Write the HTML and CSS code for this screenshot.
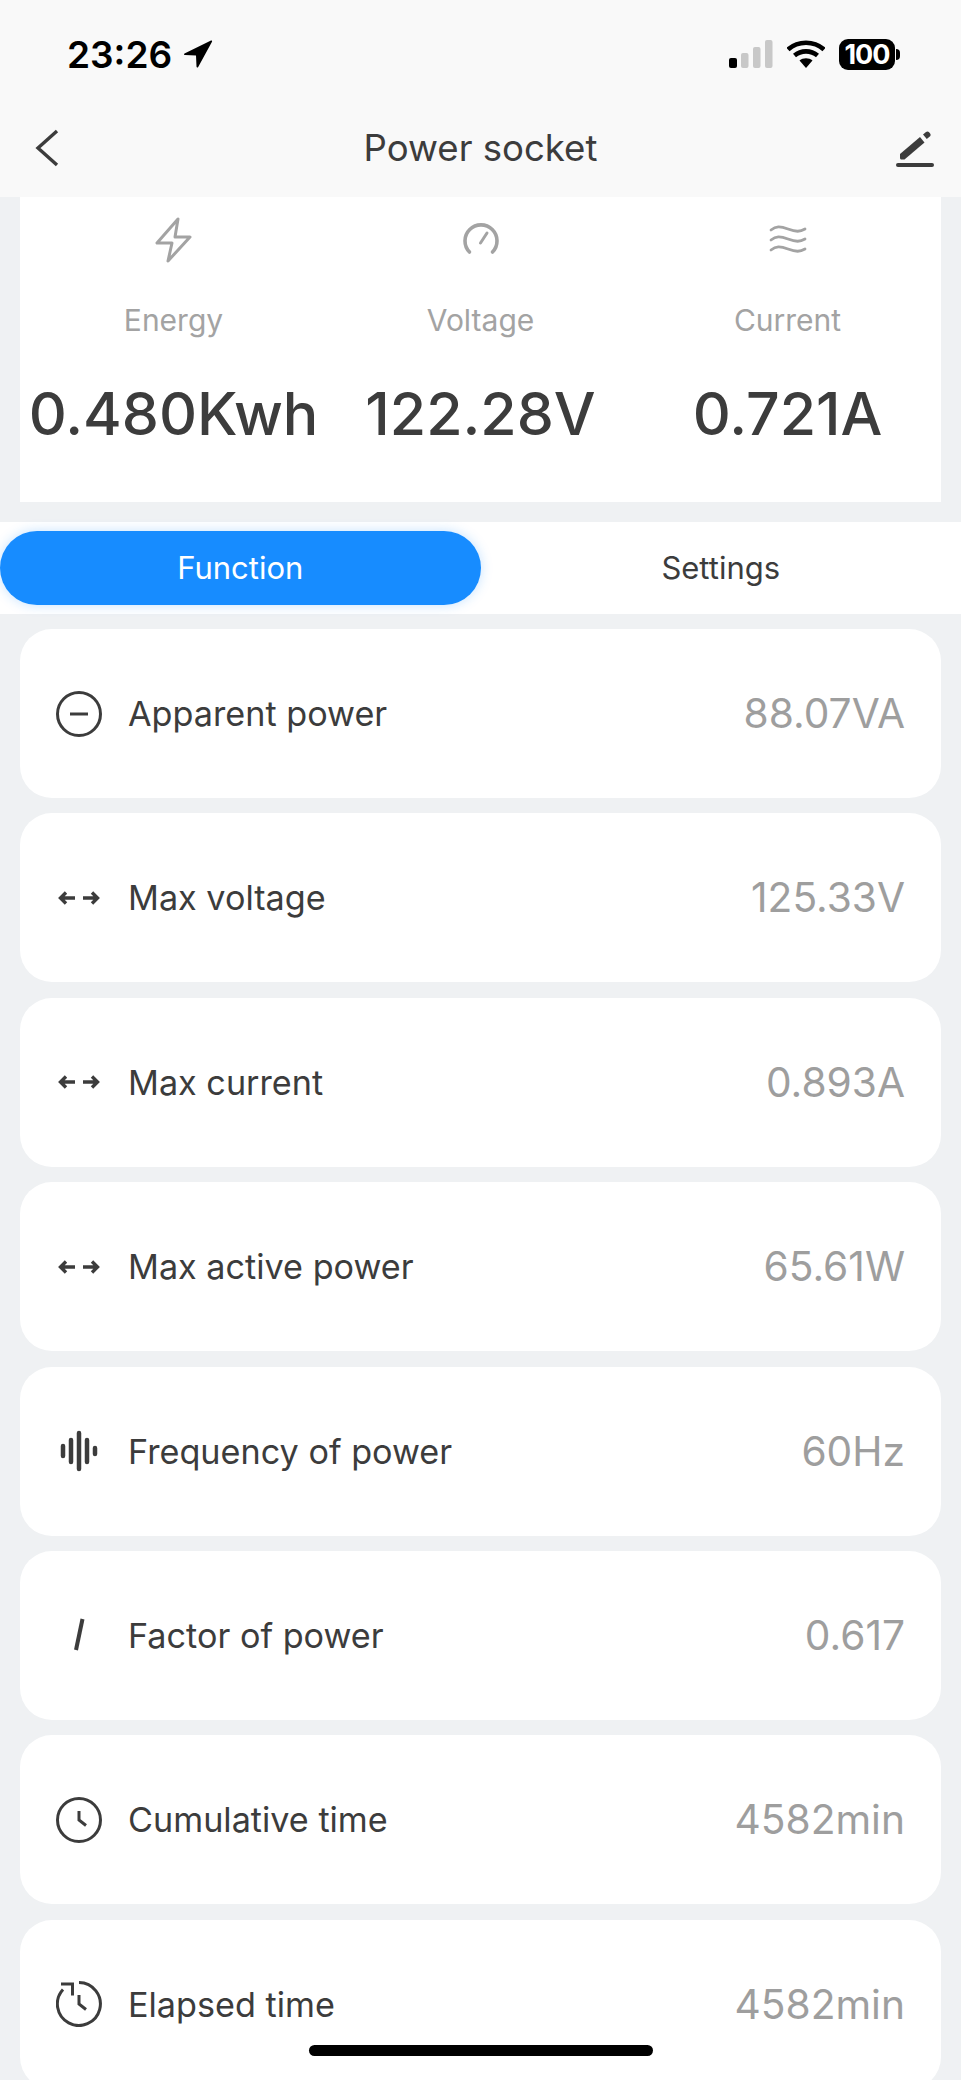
FILE: index.html
```html
<!DOCTYPE html>
<html lang="en">
<head>
    <meta charset="UTF-8">
    <meta name="viewport" content="width=device-width, initial-scale=1.0">
    <title>Power socket</title>
    <link rel="stylesheet" href="styles.css">
</head>
<body>

<div class="page">
    <div class="top">
        <div class="status">
            <div class="status-left">
                <span class="time">23:26</span>
                <svg class="arrow" viewBox="0 0 30 30"><path d="M28 1.500 1.500 14.500c-.8.5-.5 1.600.5 1.600L13 16.500l.5 11c0 1.100 1.200 1.300 1.700.4L29 2.700c.4-.8-.2-1.500-1-1.200z"/></svg>
            </div>
            <div class="status-right">
                <svg class="signal" viewBox="0 0 44 28">
                    <rect x="0" y="18" width="8" height="10" rx="2" fill="#000"/>
                    <rect x="12" y="13" width="7.500" height="15" rx="2" fill="#c8c8c8"/>
                    <rect x="24" y="7" width="7.500" height="21" rx="2" fill="#c8c8c8"/>
                    <rect x="36" y="0" width="7.500" height="28" rx="2" fill="#c8c8c8"/>
                </svg>
                <svg class="wifi" viewBox="0 0 38 28">
                    <path d="M1 9.500C11 .5 27 .5 37 9.500" fill="none" stroke="#000" stroke-width="4.600"/>
                    <path d="M7.500 15.500c6.500-5.500 16.500-5.500 23 0" fill="none" stroke="#000" stroke-width="4.600"/>
                    <path d="M12.500 20.500c3.500-3 9.500-3 13 0L19 28z"/>
                </svg>
                <div class="battery"><span class="battery-level">100</span><span class="battery-nub"></span></div>
            </div>
        </div>
        <div class="nav">
            <svg class="nav-back" viewBox="0 0 24 38"><path d="M22 2 3 19l19 17" fill="none" stroke="#3c3c3c" stroke-width="3.400"/></svg>
            <h1 class="nav-title">Power socket</h1>
            <svg class="nav-edit" viewBox="0 0 40 40">
                <path d="M5 26 25 9l4.500 5.500-20 17H6.500c-1 0-1.500-.7-1.500-1.500z" fill="#3c3c3c"/>
                <path d="M28 6.500 31 4c1-.8 2.300-.7 3.100.3l1 1.200c.8 1 .7 2.300-.3 3.100l-3 2.500z" fill="#3c3c3c"/>
                <rect x="1" y="35" width="38" height="4" rx="2" fill="#3c3c3c"/>
            </svg>
        </div>
    </div>

    <div class="stats">
        <div class="stat">
            <svg class="stat-icon" viewBox="0 0 46 46"><path d="M27 2 6 26h15l-4 18 22-24H24z" fill="none" stroke="#a3a3a3" stroke-width="3" stroke-linejoin="round"/></svg>
            <div class="stat-label">Energy</div>
            <div class="stat-value">0.480Kwh</div>
        </div>
        <div class="stat">
            <svg class="stat-icon" viewBox="0 0 46 46">
                <path d="M11.500 35A16 16 0 1 1 34.500 35" fill="none" stroke="#a3a3a3" stroke-width="3.600" stroke-linecap="round"/>
                <path d="M22.500 26 29 16" fill="none" stroke="#a3a3a3" stroke-width="3" stroke-linecap="round"/>
            </svg>
            <div class="stat-label">Voltage</div>
            <div class="stat-value">122.28V</div>
        </div>
        <div class="stat">
            <svg class="stat-icon" viewBox="0 0 46 46">
                <g fill="none" stroke="#a3a3a3" stroke-width="2.800" stroke-linecap="round">
                    <path d="M6 13c5-4 9-4 17-1s12 3 17 0"/>
                    <path d="M6 23c5-4 9-4 17-1s12 3 17 0"/>
                    <path d="M6 33c5-4 9-4 17-1s12 3 17 0"/>
                </g>
            </svg>
            <div class="stat-label">Current</div>
            <div class="stat-value">0.721A</div>
        </div>
    </div>

    <div class="tabs">
        <div class="tab tab-active">Function</div>
        <div class="tab">Settings</div>
    </div>

    <div class="list">
        <div class="row">
            <svg class="row-icon" viewBox="0 0 46 46"><circle cx="23" cy="23" r="21.500" class="line"/><path d="M14 23h18" class="line"/></svg>
            <span class="row-label">Apparent power</span>
            <span class="row-value">88.07VA</span>
        </div>
        <div class="row">
            <svg class="row-icon" viewBox="0 0 46 46"><path d="M5 23h14M10 17.500 4.500 23l5.500 5.500M27 23h14M36 17.500l5.500 5.500-5.500 5.500" class="arrows"/></svg>
            <span class="row-label">Max voltage</span>
            <span class="row-value">125.33V</span>
        </div>
        <div class="row">
            <svg class="row-icon" viewBox="0 0 46 46"><path d="M5 23h14M10 17.500 4.500 23l5.500 5.500M27 23h14M36 17.500l5.500 5.500-5.500 5.500" class="arrows"/></svg>
            <span class="row-label">Max current</span>
            <span class="row-value">0.893A</span>
        </div>
        <div class="row">
            <svg class="row-icon" viewBox="0 0 46 46"><path d="M5 23h14M10 17.500 4.500 23l5.500 5.500M27 23h14M36 17.500l5.500 5.500-5.500 5.500" class="arrows"/></svg>
            <span class="row-label">Max active power</span>
            <span class="row-value">65.61W</span>
        </div>
        <div class="row">
            <svg class="row-icon" viewBox="0 0 46 46"><path d="M7 18v10M15 12v22M23 5v36M31 12v22M39 20v6" class="bars"/></svg>
            <span class="row-label">Frequency of power</span>
            <span class="row-value">60Hz</span>
        </div>
        <div class="row">
            <svg class="row-icon" viewBox="0 0 46 46"><path d="M26.500 7 20 38" class="factor"/></svg>
            <span class="row-label">Factor of power</span>
            <span class="row-value">0.617</span>
        </div>
        <div class="row">
            <svg class="row-icon" viewBox="0 0 46 46"><circle cx="23" cy="23" r="21.500" class="line"/><path d="M23 14v9l7 5.500" class="line"/></svg>
            <span class="row-label">Cumulative time</span>
            <span class="row-value">4582min</span>
        </div>
        <div class="row">
            <svg class="row-icon" viewBox="0 0 46 46"><path d="M23 1.500a21.500 21.500 0 1 1-16 7" class="line"/><path d="M5 3h11.500v11.500" class="line"/><path d="M23 14v9l7 5.500" class="line"/></svg>
            <span class="row-label">Elapsed time</span>
            <span class="row-value">4582min</span>
        </div>
    </div>

    <div class="home-bar"></div>
</div>

</body>
</html>
```

FILE: styles.css
```css
* {
    box-sizing: border-box;
}
html, body {
    margin: 0;
    padding: 0;
}
body {
    font-family: Inter, "Liberation Sans", sans-serif;
    background-color: #eff1f3;
    color: #3c3c3c;
}
.page {
    position: relative;
    width: 961px;
    height: 2080px;
    overflow: hidden;
}

.top {
    background-color: #f9f9f9;
    height: 197px;
}
.status {
    display: flex;
    justify-content: space-between;
    align-items: center;
    height: 108px;
    padding: 0 61px 0 67px;
}
.status-left {
    display: flex;
    align-items: center;
    gap: 11px;
}
.time {
    font-size: 37px;
    font-weight: 600;
    color: #000;
}
.arrow {
    width: 30px;
    height: 30px;
}
.status-right {
    display: flex;
    align-items: center;
}
.signal {
    width: 44px;
    height: 28px;
    margin-right: 14px;
}
.wifi {
    width: 38px;
    height: 28px;
    margin-right: 14px;
}
.battery {
    display: flex;
    align-items: center;
}
.battery-level {
    width: 56px;
    height: 31px;
    line-height: 31px;
    background: #000;
    color: #fff;
    border-radius: 9px;
    font-size: 27px;
    font-weight: 700;
    text-align: center;
    letter-spacing: -1px;
}
.battery-nub {
    width: 4px;
    height: 11px;
    margin-left: 1px;
    background: #000;
    border-radius: 0 4px 4px 0;
}
.nav {
    display: grid;
    grid-template-columns: 1fr auto 1fr;
    align-items: center;
    height: 80px;
    padding: 0 26px;
}
.nav-back {
    width: 24px;
    height: 38px;
    margin-left: 9px;
}
.nav-title {
    margin: 0;
    font-size: 36.600px;
    font-weight: 400;
}
.nav-edit {
    justify-self: end;
    width: 40px;
    height: 40px;
}

.stats {
    display: grid;
    grid-template-columns: repeat(3, 1fr);
    height: 305px;
    margin: 0 20px 20px;
    background: white;
}
.stat {
    display: flex;
    flex-direction: column;
    align-items: center;
    padding-top: 20px;
}
.stat-icon {
    width: 46px;
    height: 46px;
}
.stat-label {
    margin-top: 39px;
    font-size: 30px;
    line-height: 36px;
    color: #a3a3a3;
}
.stat-value {
    margin-top: 40px;
    font-size: 59px;
    font-weight: 500;
    line-height: 72px;
    white-space: nowrap;
}

.tabs {
    display: grid;
    grid-template-columns: 1fr 1fr;
    align-items: center;
    height: 92px;
    background: white;
}
.tab {
    height: 74px;
    line-height: 74px;
    text-align: center;
    font-size: 31px;
}
.tab-active {
    background-color: #178cff;
    color: white;
    border-radius: 37px;
    box-shadow: 0 0 12px rgba(23, 140, 255, 0.25);
}

.list {
    display: flex;
    flex-direction: column;
    gap: 15.400px;
    padding: 15px 20px 0;
}
.row {
    display: flex;
    align-items: center;
    flex: none;
    height: 169px;
    padding: 0 36px 0 36px;
    background: white;
    border-radius: 32px;
}
.row-icon {
    flex: none;
    width: 46px;
    height: 46px;
    margin-right: 26px;
}
.row-label {
    font-size: 34.200px;
}
.row-value {
    margin-left: auto;
    font-size: 40.700px;
    color: #9e9e9e;
}
.line {
    fill: none;
    stroke: #3c3c3c;
    stroke-width: 3;
}
.arrows {
    fill: none;
    stroke: #3c3c3c;
    stroke-width: 3.400;
}
.bars {
    fill: none;
    stroke: #3c3c3c;
    stroke-width: 4.500;
    stroke-linecap: round;
}
.factor {
    fill: none;
    stroke: #3c3c3c;
    stroke-width: 4;
}

.home-bar {
    position: absolute;
    left: 309px;
    bottom: 24px;
    width: 344px;
    height: 11px;
    background: #000;
    border-radius: 6px;
}
```
